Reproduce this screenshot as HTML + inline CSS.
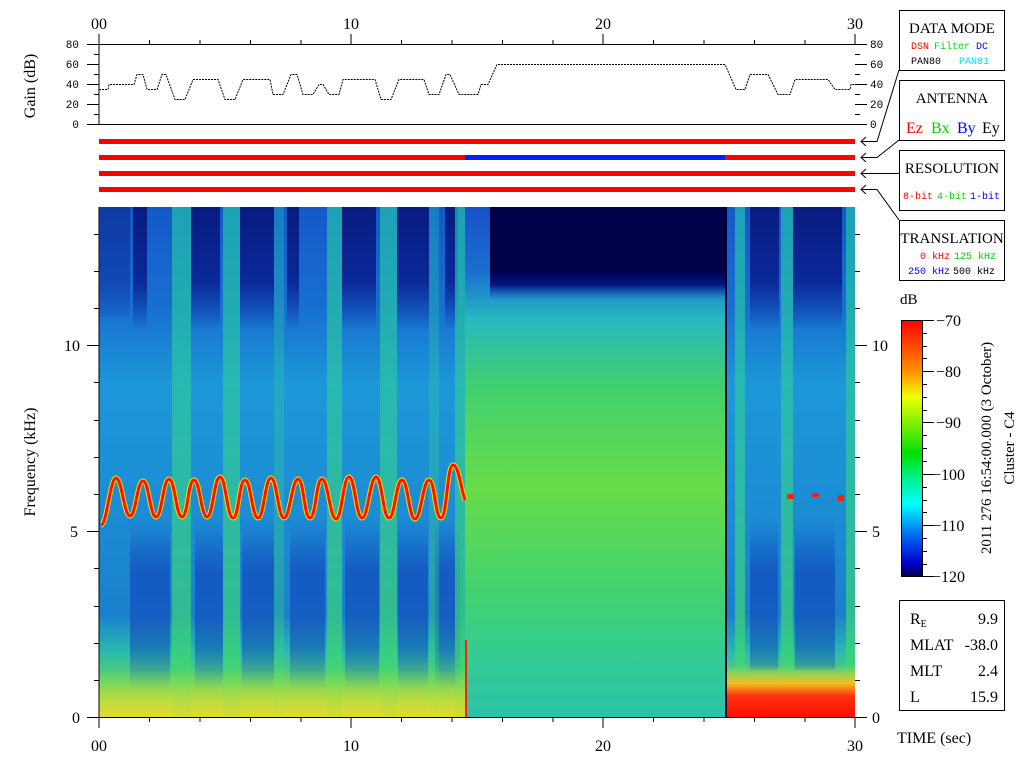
<!DOCTYPE html>
<html><head><meta charset="utf-8"><style>
html,body{margin:0;padding:0;background:#fff;}
svg{display:block;}
text{font-family:"Liberation Serif",serif;}
.m text,text.m{font-family:"Liberation Mono",monospace;}
</style></head><body>
<svg width="1024" height="768" viewBox="0 0 1024 768" xmlns="http://www.w3.org/2000/svg">
<defs>
<linearGradient id="base" x1="0" y1="207" x2="0" y2="717" gradientUnits="userSpaceOnUse">
<stop offset="0" stop-color="#1458c8"/><stop offset="0.2" stop-color="#1870d0"/>
<stop offset="0.35" stop-color="#1c98d8"/><stop offset="0.6" stop-color="#1c8cd4"/>
<stop offset="0.8" stop-color="#1a80cc"/><stop offset="0.87" stop-color="#28b8b0"/>
<stop offset="0.93" stop-color="#60d468"/><stop offset="1" stop-color="#d0e030"/>
</linearGradient>
<linearGradient id="dark" x1="0" y1="207" x2="0" y2="330" gradientUnits="userSpaceOnUse">
<stop offset="0" stop-color="#081c80"/><stop offset="0.6" stop-color="#0a2898"/><stop offset="1" stop-color="#0a2898" stop-opacity="0"/>
</linearGradient>
<linearGradient id="dark2" x1="0" y1="520" x2="0" y2="690" gradientUnits="userSpaceOnUse">
<stop offset="0" stop-color="#1040b8" stop-opacity="0"/><stop offset="0.3" stop-color="#1040b8" stop-opacity="0.6"/><stop offset="0.75" stop-color="#1040b8" stop-opacity="0.5"/><stop offset="1" stop-color="#1040b8" stop-opacity="0"/>
</linearGradient>
<linearGradient id="grn" x1="0" y1="207" x2="0" y2="717" gradientUnits="userSpaceOnUse">
<stop offset="0" stop-color="#20c0b0"/><stop offset="0.4" stop-color="#30c8a0"/><stop offset="0.9" stop-color="#40d870"/><stop offset="1" stop-color="#a0e040"/>
</linearGradient>
<linearGradient id="mid" x1="0" y1="207" x2="0" y2="717" gradientUnits="userSpaceOnUse">
<stop offset="0" stop-color="#1850c8"/><stop offset="0.13" stop-color="#1a70d0"/>
<stop offset="0.22" stop-color="#28b8c0"/><stop offset="0.35" stop-color="#40d070"/>
<stop offset="0.55" stop-color="#68dc48"/><stop offset="0.72" stop-color="#48d468"/>
<stop offset="0.87" stop-color="#34cc90"/><stop offset="1" stop-color="#2cc4a8"/>
</linearGradient>
<linearGradient id="navy" x1="0" y1="270" x2="0" y2="300" gradientUnits="userSpaceOnUse">
<stop offset="0" stop-color="#000048"/><stop offset="0.5" stop-color="#001880"/><stop offset="1" stop-color="#1850c8" stop-opacity="0"/>
</linearGradient>
<linearGradient id="redb" x1="0" y1="665" x2="0" y2="717" gradientUnits="userSpaceOnUse">
<stop offset="0" stop-color="#c0e040" stop-opacity="0"/><stop offset="0.35" stop-color="#f0c020"/><stop offset="0.6" stop-color="#ff3010"/><stop offset="1" stop-color="#ff1000"/>
</linearGradient>
<linearGradient id="yel" x1="0" y1="670" x2="0" y2="717" gradientUnits="userSpaceOnUse">
<stop offset="0" stop-color="#d8e040" stop-opacity="0"/><stop offset="1" stop-color="#e8d830" stop-opacity="0.7"/>
</linearGradient>
<linearGradient id="cbar" x1="0" y1="320" x2="0" y2="576" gradientUnits="userSpaceOnUse">
<stop offset="0" stop-color="#ff0000"/><stop offset="0.2" stop-color="#ff9000"/><stop offset="0.3" stop-color="#f0ff00"/>
<stop offset="0.52" stop-color="#00e000"/><stop offset="0.62" stop-color="#00f090"/><stop offset="0.72" stop-color="#00ffff"/>
<stop offset="0.85" stop-color="#0060f0"/><stop offset="0.95" stop-color="#0000d0"/><stop offset="1" stop-color="#000050"/>
</linearGradient>
</defs>

<!-- spectrogram -->
<rect x="99" y="207" width="756" height="510" fill="url(#base)"/>
<g fill="url(#dark)">
<rect x="133" y="207" width="14" height="125"/><rect x="191" y="207" width="29" height="125"/>
<rect x="240" y="207" width="34" height="125"/><rect x="287" y="207" width="12" height="125"/>
<rect x="342" y="207" width="34" height="125"/><rect x="397" y="207" width="32" height="125"/>
<rect x="445" y="207" width="13" height="125"/><rect x="100" y="207" width="30" height="110" opacity="0.5"/>
<rect x="750" y="207" width="29" height="125"/><rect x="793" y="207" width="49" height="125"/>
</g>
<g fill="url(#dark2)">
<rect x="130" y="520" width="40" height="170"/><rect x="195" y="520" width="28" height="170"/>
<rect x="242" y="520" width="32" height="170"/><rect x="290" y="520" width="35" height="170"/>
<rect x="345" y="520" width="34" height="170"/><rect x="398" y="520" width="30" height="170"/>
<rect x="435" y="520" width="25" height="170"/>
<rect x="750" y="520" width="28" height="150"/><rect x="795" y="520" width="40" height="150"/>
</g>
<g fill="url(#grn)" opacity="0.7">
<rect x="172" y="207" width="19" height="510"/><rect x="223" y="207" width="17" height="510"/>
<rect x="327" y="207" width="15" height="510"/><rect x="380" y="207" width="17" height="510"/>
<rect x="455" y="207" width="10" height="510"/><rect x="735" y="207" width="10" height="510"/>
<rect x="781" y="207" width="12" height="510"/><rect x="846" y="207" width="9" height="510"/>
</g>
<g fill="url(#grn)" opacity="0.35">
<rect x="274" y="207" width="10" height="510"/><rect x="429" y="207" width="10" height="510"/>
</g>
<rect x="99" y="670" width="366" height="47" fill="url(#yel)"/>
<rect x="465" y="207" width="260" height="510" fill="url(#mid)"/>
<rect x="490" y="207" width="235" height="93" fill="url(#navy)"/>
<rect x="490" y="207" width="235" height="65" fill="#000048"/>
<rect x="725" y="207" width="2" height="510" fill="#000030"/>
<rect x="727" y="665" width="128" height="52" fill="url(#redb)"/>
<rect x="465" y="640" width="2" height="77" fill="#ff2000"/>
<g fill="none">
<path d="M101,525 C107,525 110,478 116,478 C122,478 124,516 130,516 C136,516 137,481 143,481 C149,481 150,517 156,517 C162,517 163,479 169,479 C175,479 176,517 182,517 C188,517 188,480 194,480 C200,480 201,517 207,517 C213,517 214,477 220,477 C226,477 227,518 233,518 C239,518 239,480 245,480 C251,480 252,518 258,518 C264,518 265,478 271,478 C277,478 278,518 284,518 C290,518 292,479 298,479 C304,479 304,518 310,518 C316,518 316,479 322,479 C328,479 330,519 336,519 C342,519 343,477 349,477 C355,477 356,518 362,518 C368,518 370,477 376,477 C382,477 383,518 389,518 C395,518 396,480 402,480 C408,480 409,519 415,519 C421,519 423,480 429,480 C435,480 435,518 441,518 C447,518 447,465 453,465 C459,465 461,490 465,500" stroke="#f0e000" stroke-width="5"/>
<path d="M101,525 C107,525 110,478 116,478 C122,478 124,516 130,516 C136,516 137,481 143,481 C149,481 150,517 156,517 C162,517 163,479 169,479 C175,479 176,517 182,517 C188,517 188,480 194,480 C200,480 201,517 207,517 C213,517 214,477 220,477 C226,477 227,518 233,518 C239,518 239,480 245,480 C251,480 252,518 258,518 C264,518 265,478 271,478 C277,478 278,518 284,518 C290,518 292,479 298,479 C304,479 304,518 310,518 C316,518 316,479 322,479 C328,479 330,519 336,519 C342,519 343,477 349,477 C355,477 356,518 362,518 C368,518 370,477 376,477 C382,477 383,518 389,518 C395,518 396,480 402,480 C408,480 409,519 415,519 C421,519 423,480 429,480 C435,480 435,518 441,518 C447,518 447,465 453,465 C459,465 461,490 465,500" stroke="#ff1000" stroke-width="3"/>
</g>
<g fill="#ff2000"><rect x="787" y="494" width="7" height="5"/><rect x="812" y="493" width="7" height="4"/><rect x="838" y="495" width="6" height="6"/></g>

<!-- spectrogram axes -->
<g stroke="#000" stroke-width="1" fill="none">
<line x1="99" y1="207" x2="99" y2="728"/><line x1="99" y1="717.5" x2="855" y2="717.5"/>
<path d="M87,717.5H99M87,531.5H99M87,345.5H99M94,680.5H99M94,643.5H99M94,606.5H99M94,568.5H99M94,494.5H99M94,457.5H99M94,420.5H99M94,382.5H99M94,308.5H99M94,271.5H99M94,234.5H99"/>
<path d="M855,717.5H867M855,531.5H867M855,345.5H867M855,680.5H860M855,643.5H860M855,606.5H860M855,568.5H860M855,494.5H860M855,457.5H860M855,420.5H860M855,382.5H860M855,308.5H860M855,271.5H860M855,234.5H860"/>
<path d="M351,717V728M603,717V728M855,717V728M149.5,717V722M200,717V722M250.5,717V722M301,717V722M401.5,717V722M452,717V722M502.5,717V722M553,717V722M653.5,717V722M704,717V722M754.5,717V722M805,717V722"/>
</g>
<g font-size="16" text-anchor="middle">
<text x="99" y="751">00</text><text x="351" y="751">10</text><text x="603" y="751">20</text><text x="855" y="751">30</text>
<text x="99" y="29">00</text><text x="351" y="29">10</text><text x="603" y="29">20</text><text x="855" y="29">30</text>
</g>
<g font-size="16" text-anchor="end"><text x="80" y="723">0</text><text x="78" y="537">5</text><text x="80" y="351">10</text></g>
<g font-size="16"><text x="872" y="723">0</text><text x="872" y="537">5</text><text x="872" y="351">10</text></g>
<text font-size="16" transform="translate(35,462) rotate(-90)" text-anchor="middle">Frequency (kHz)</text>
<text font-size="16" transform="translate(35,86) rotate(-90)" text-anchor="middle">Gain (dB)</text>

<!-- gain plot -->
<g stroke="#000" stroke-width="1" fill="none">
<line x1="99" y1="34" x2="99" y2="124"/>
<line x1="87" y1="44.5" x2="855" y2="44.5"/><line x1="87" y1="124.5" x2="855" y2="124.5"/>
<path d="M94,54.5H99M87,64.5H99M94,74.5H99M87,84.5H99M94,94.5H99M87,104.5H99M94,114.5H99"/>
<path d="M855,44.5H867M855,54.5H860M855,64.5H867M855,74.5H860M855,84.5H867M855,94.5H860M855,104.5H867M855,114.5H860M855,124.5H867"/>
<path d="M149.5,44V40M200,44V40M250.5,44V40M301,44V40M351,44V34M401.5,44V40M452,44V40M502.5,44V40M553,44V40M603,44V34M653.5,44V40M704,44V40M754.5,44V40M805,44V40M855,44V34"/>
<path d="M99,89.5H108L109,84.5H134L137,74.5H143L147,89.5H157L162,74.5H166L175,99.5H185L193,79.5H218L225,99.5H235L243,79.5H270L273,94.5H283L291,74.5H297L303,94.5H313L319,84.5H323L329,94.5H339L343,79.5H375L381,99.5H391L399,79.5H424L429,94.5H439L446,74.5H450L459,94.5H478L481,84.5H488L497,64.5H725L736,89.5H745L750,74.5H768L778,94.5H790L795,79.5H828L835,89.5H850L851,84.5H855" stroke-dasharray="2,1"/>
</g>
<g class="m" font-size="11" text-anchor="end">
<text x="79" y="48">80</text><text x="79" y="68">60</text><text x="79" y="88">40</text><text x="79" y="108">20</text><text x="79" y="128">0</text>
</g>
<g class="m" font-size="11">
<text x="870" y="48">80</text><text x="870" y="68">60</text><text x="870" y="88">40</text><text x="870" y="108">20</text><text x="870" y="128">0</text>
</g>

<!-- bars -->
<g fill="#ff0000">
<rect x="99" y="139" width="756" height="5"/><rect x="99" y="155" width="756" height="5"/>
<rect x="99" y="171" width="756" height="5"/><rect x="99" y="187" width="756" height="5"/>
</g>
<rect x="465" y="155" width="260" height="5" fill="#0020ff"/>

<!-- right boxes -->
<g stroke="#000" stroke-width="1" fill="none">
<rect x="899.5" y="10.5" width="105" height="60"/><rect x="899.5" y="80.5" width="105" height="60"/>
<rect x="899.5" y="150.5" width="105" height="60"/><rect x="899.5" y="220.5" width="105" height="60"/>
<rect x="899.5" y="600.5" width="105" height="110"/>
<path d="M899,70L877,141.5H861M866,137L861,141.5L866,146"/>
<path d="M899,140L877,157.5H861M866,153L861,157.5L866,162"/>
<path d="M899,173.5H861M866,169L861,173.5L866,178"/>
<path d="M899,220L877,189.5H861M866,185L861,189.5L866,194"/>
</g>
<g font-size="15" text-anchor="middle">
<text x="952" y="33">DATA MODE</text><text x="952" y="103">ANTENNA</text>
<text x="952" y="173">RESOLUTION</text><text x="952" y="243">TRANSLATION</text>
</g>
<g class="m" font-size="10">
<text x="911" y="49" fill="#ff0000">DSN</text><text x="934" y="49" fill="#00e000">Filter</text><text x="976" y="49" fill="#0000ff">DC</text>
<text x="911" y="64">PAN80</text><text x="959" y="64" fill="#00e0ff">PAN81</text>
<text x="903" y="199" fill="#ff0000">8-bit</text><text x="937" y="199" fill="#00d000">4-bit</text><text x="970" y="199" fill="#0000ff">1-bit</text>
<text x="920" y="259" fill="#ff0000">0 kHz</text><text x="954" y="259" fill="#00d000">125 kHz</text>
<text x="908" y="274" fill="#0000ff">250 kHz</text><text x="953" y="274">500 kHz</text>
</g>
<g font-size="16">
<text x="906" y="133" fill="#ff0000">Ez</text><text x="931" y="133" fill="#00d000">Bx</text><text x="957" y="133" fill="#0000ff">By</text><text x="982" y="133">Ey</text>
</g>

<!-- colorbar -->
<text x="900" y="304" font-size="15">dB</text>
<rect x="901" y="320" width="21" height="256" fill="url(#cbar)"/>
<rect x="901.5" y="320.5" width="21" height="256" fill="none" stroke="#000"/>
<path d="M922,320.5H934M922,371.5H934M922,422.5H934M922,474.5H934M922,525.5H934M922,576.5H934M922,333.5H927M922,346.5H927M922,358.5H927M922,384.5H927M922,397.5H927M922,410.5H927M922,435.5H927M922,448.5H927M922,461.5H927M922,487.5H927M922,500.5H927M922,512.5H927M922,538.5H927M922,551.5H927M922,564.5H927" stroke="#000"/>
<g font-size="16">
<text x="936" y="326">−70</text><text x="936" y="377">−80</text><text x="936" y="428">−90</text>
<text x="932" y="480">−100</text><text x="932" y="531">−110</text><text x="932" y="582">−120</text>
</g>
<text font-size="15" transform="translate(991,448) rotate(-90)" text-anchor="middle">2011 276 16:54:00.000 (3 October)</text>
<text font-size="15" transform="translate(1014,448) rotate(-90)" text-anchor="middle">Cluster - C4</text>

<!-- info box -->
<g font-size="16">
<text x="910" y="624">R<tspan font-size="10" dy="3">E</tspan></text><text x="998" y="624" text-anchor="end">9.9</text>
<text x="910" y="650">MLAT</text><text x="998" y="650" text-anchor="end">-38.0</text>
<text x="910" y="676">MLT</text><text x="998" y="676" text-anchor="end">2.4</text>
<text x="910" y="702">L</text><text x="998" y="702" text-anchor="end">15.9</text>
<text x="897" y="743">TIME (sec)</text>
</g>
</svg>
</body></html>
